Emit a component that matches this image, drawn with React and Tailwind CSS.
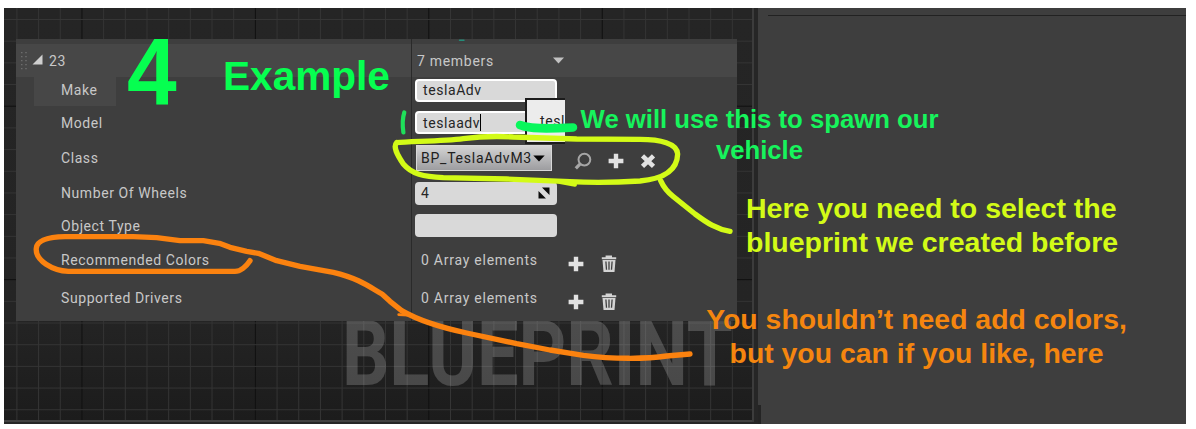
import React from "react";

const Plus = () => (
  <svg className="h-4 w-4 shrink-0" viewBox="0 0 16 16">
    <path d="M8 0.7v14.6M0.6 8h14.8" stroke="#e2e2e2" strokeWidth="4.4" />
  </svg>
);

const Close = () => (
  <svg className="h-4 w-4 shrink-0" viewBox="0 0 16 16">
    <path d="M2.5 2.8l11 10.6M13.5 2.8l-11 10.6" stroke="#e2e2e2" strokeWidth="4.6" />
  </svg>
);

const Search = () => (
  <svg className="h-[18px] w-[18px] shrink-0" viewBox="0 0 18 18" fill="none">
    <circle cx="10.4" cy="7.6" r="5.9" stroke="#a6a6a6" strokeWidth="2" />
    <path d="M6.2 11.8L1.8 16.4" stroke="#a6a6a6" strokeWidth="3.2" />
  </svg>
);

const Trash = () => (
  <svg className="h-[18px] w-4 shrink-0" viewBox="0 0 16 18">
    <path d="M4.6 0.6h6.4v1.6h4.2v2.1H0.8V2.2h3.8z" fill="#d4d4d4" />
    <path d="M1.5 5h13l-1 12h-11z" fill="#d4d4d4" />
    <path d="M4.9 6.5l.6 8.3M8 6.5v8.3M11.1 6.5l-.6 8.3" stroke="#404040" strokeWidth="1.3" />
  </svg>
);

const Row = ({ label, className, children }) => (
  <div className={"flex items-center " + className}>
    <div className="w-[395px] shrink-0 pl-[45px]">{label}</div>
    {children}
  </div>
);

const Field = ({ children, className = "" }) => (
  <div
    className={
      "ml-1 flex h-[23px] w-[142px] items-center rounded-[4px] bg-[#d9d9d9] pl-[6px] text-[#262626] " + className
    }
  >
    {children}
  </div>
);

const range = (n) => Array.from({ length: n }, (_, i) => i);

const Grid = () => (
  <svg className="absolute inset-0 h-full w-full" viewBox="4 8 748 412" preserveAspectRatio="none">
    <defs>
      <linearGradient id="shade" x1="0" y1="0" x2="0" y2="1">
        <stop offset="0" stopColor="#252525" />
        <stop offset="0.75" stopColor="#242424" />
        <stop offset="1" stopColor="#1c1c1c" />
      </linearGradient>
    </defs>
    <rect x="4" y="8" width="748" height="412" fill="url(#shade)" />
    {range(34).map((i) => (
      <rect key={"v" + i} x={16.4 + i * 21.68} y="8" width="1" height="412" fill={i % 8 === 3 ? "#101010" : "#353535"} />
    ))}
    {range(19).map((i) => (
      <rect key={"h" + i} x="4" y={19 + i * 21.68} width="748" height="1" fill={i % 8 === 4 ? "#101010" : "#353535"} />
    ))}
  </svg>
);

const Strokes = () => (
  <svg className="absolute inset-0 h-[429px] w-[1196px]" viewBox="0 0 1196 429" fill="none" strokeLinecap="round" strokeLinejoin="round">
    <g stroke="#d3fb17" strokeWidth="16" transform="translate(390 0) scale(.33333)">
      <path d="M20 428C60 424 160 424 220 416S320 408 370 411L560 417L750 418C810 418 862 430 863 462C862 500 838 535 750 543C690 547 610 549 540 545L350 537L160 533C100 530 65 522 40 492C22 465 8 440 20 428" />
      <path d="M510 546L555 554" strokeWidth="12" />
      <path d="M812 542C820 560 832 576 850 590L915 642C950 668 980 688 1020 694" />
    </g>
    <g stroke="#fb820f" strokeWidth="16" transform="translate(0 214) scale(.33333)">
      <path d="M750 140C738 158 720 172 705 172H205C160 170 104 140 109 102C112 76 150 69 195 68H400L470 71L540 80L610 80L658 88L690 100L740 112L775 118L830 140L900 157L1000 175C1080 194 1110 220 1146 240L1170 262L1205 290C1260 322 1320 340 1400 357L1550 389L1650 408L1750 424C1840 436 1940 435 2000 426L2070 420" />
      <path d="M1196 302L1238 304" strokeWidth="8" />
    </g>
    <path d="M404.3 112.5C402.8 117 402.5 126 403.4 132.5" stroke="#1fe05a" strokeWidth="4.2" />
    <path d="M520 125C530 129 546 129 573 127.5" stroke="#08f75c" strokeWidth="8.5" />
    <path d="M459.5 40.2h4.5" stroke="#248c79" strokeWidth="1.4" />
  </svg>
);

export default function App() {
  return (
    <div className="relative h-[429px] w-[1196px] overflow-hidden bg-white pl-1 pt-2 font-['Roboto',sans-serif] text-[14px] leading-[18px] tracking-[0.58px] text-[#c8c8c8]">
      <div className="flex h-[416px] w-[1182px] bg-[#3e3e3e]">
        <div className="flex w-[754px] flex-col bg-[#262626]">
          <div className="relative h-[412px] w-[748px] overflow-hidden">
            <Grid />
            <div className="absolute left-[338px] top-[317px] origin-left scale-x-[0.823] whitespace-nowrap text-[90px] font-bold leading-[60px] tracking-normal text-white/[0.19]">
              BLUEPRINT
            </div>
            <div className="relative ml-3 mt-[31px] w-[721px] bg-[#3e3e3e] pt-[5px]">
              <div className="flex h-[33px] items-center bg-[#474747]">
                <svg className="ml-[5px] h-5 w-[6px]" viewBox="0 0 6 20">
                  <path d="M.8 1v19M5 1v19" stroke="#777" strokeWidth="1.2" strokeDasharray="1.2 2.8" />
                </svg>
                <svg className="ml-[5px] mt-[-3px] h-[11px] w-[11px]" viewBox="0 0 11 11">
                  <path d="M10.5 0.5v10H0.5z" fill="#cfcfcf" />
                </svg>
                <div className="ml-[6px] w-[368px]">23</div>
                <div className="w-[136px] tracking-[0.7px]">7 members</div>
                <svg className="h-[7px] w-[11px]" viewBox="0 0 11 7">
                  <path d="M0 0.5h11L5.5 6.5z" fill="#c2c2c2" />
                </svg>
              </div>
              <Row
                className="h-[26px]"
                label={<div className="-mb-[3px] -ml-[27px] h-[29px] w-[82px] bg-[#474747] pl-[27px] pt-1">Make</div>}
              >
                <Field className="border-2 border-white">teslaAdv</Field>
              </Row>
              <Row className="h-[39px]" label="Model">
                <Field className="border-2 border-white">
                  teslaadv<span className="h-[17px] w-px bg-black" />
                </Field>
              </Row>
              <Row className="h-[32px]" label="Class">
                <div className="ml-[5px] flex h-[26px] w-[136px] items-center justify-between border border-[#d8d8d8] bg-linear-to-b from-[#d4d4d4] to-[#9d9da0] pl-1 pr-[6px] tracking-[0.76px] text-[#202020]">
                  BP_TeslaAdvM3
                  <svg className="-ml-1 h-[7px] w-[12px] shrink-0" viewBox="0 0 12 7">
                    <path d="M0.3 0.5h11.4L6 6.5z" fill="#050505" />
                  </svg>
                </div>
                <div className="ml-[22px] mt-[5px] flex items-center gap-4">
                  <Search />
                  <Plus />
                  <Close />
                </div>
              </Row>
              <Row className="h-[38px]" label="Number Of Wheels">
                <Field className="justify-between pr-[7px]">
                  4
                  <svg className="h-3 w-3" viewBox="0 0 12 12">
                    <path d="M4 0.5h7.5V8zM0.5 4V11.5H8z" fill="#0c0c0c" />
                  </svg>
                </Field>
              </Row>
              <Row className="h-[27px]" label="Object Type">
                <Field />
              </Row>
              <Row className="h-[42px]" label="Recommended Colors">
                <div className="ml-[10px] w-[147px] tracking-[0.75px]">0 Array elements</div>
                <div className="mt-[7px] flex items-center gap-[17px]">
                  <Plus />
                  <Trash />
                </div>
              </Row>
              <Row className="h-[40px] pb-[6px]" label="Supported Drivers">
                <div className="ml-[10px] w-[147px] tracking-[0.75px]">0 Array elements</div>
                <div className="mt-[7px] flex items-center gap-[17px]">
                  <Plus />
                  <Trash />
                </div>
              </Row>
              <div className="absolute left-[395px] top-0 h-full w-px bg-[#2a2a2a]" />
            </div>
            <div className="absolute left-[521px] top-[90px] h-[46px] w-[40px] overflow-hidden border-y-2 border-l-2 border-[#1c1c1c] bg-[#ececec] pl-[13px] pt-[12px] text-[#222]">
              tesl
            </div>
          </div>
          <div className="h-[2px] w-[750px] bg-[#414141]" />
        </div>
        <div className="relative flex-1">
          <div className="ml-[10px] mt-[7px] h-px bg-[#222]" />
          <div className="absolute bottom-0 left-0 h-[19px] w-[3px] bg-[#242424]" />
        </div>
      </div>
      <div className="absolute left-[752px] top-2 h-[414px] w-[2px] bg-[#3c3c3c]" />
      <Strokes />
      <div className="absolute inset-0 whitespace-nowrap font-['Liberation_Sans',Arial,sans-serif] font-bold tracking-normal">
        <div className="absolute left-[127px] top-[19px] origin-left scale-x-[0.94] text-[95px] leading-[104px] text-[#06ff50]">4</div>
        <div className="absolute left-[223px] top-[52px] text-[40.6px] leading-[48px] text-[#06ff50]">Example</div>
        <div className="absolute left-[580px] top-[104px] w-[359px] text-center text-[25.7px] leading-[31px] text-[#16f45c]">
          <div>We will use this to spawn our</div>
          <div>vehicle</div>
        </div>
        <div className="absolute left-[746px] top-[191px] text-[28.5px] leading-[34px] text-[#d3fb17]">
          <div>Here you need to select the</div>
          <div>blueprint we created before</div>
        </div>
        <div className="absolute left-[705px] top-[302px] w-[423px] text-center text-[28.4px] leading-[34px] text-[#f5860f]">
          <div>You shouldn’t need add colors,</div>
          <div>but you can if you like, here</div>
        </div>
      </div>
    </div>
  );
}
